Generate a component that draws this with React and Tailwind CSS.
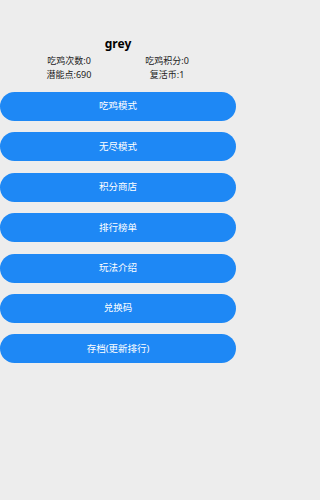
import React from 'react';

const stats = [
  ['吃鸡次数:0', '吃鸡积分:0'],
  ['潜能点:690', '复活币:1'],
];

const menu = ['吃鸡模式', '无尽模式', '积分商店', '排行榜单', '玩法介绍', '兑换码', '存档(更新排行)'];

const App = () => {
  return (
    <div
      className="min-h-screen bg-[#ededed] text-[#222]"
      style={{ fontFamily: '"Noto Sans", "Noto Sans CJK SC", sans-serif' }}
    >
      <div className="w-[236px] pt-[36px]">
        <h1 className="text-center text-[12px] font-bold leading-[16px] text-black">grey</h1>

        <div className="mt-[2px] grid grid-cols-2 px-5 text-[9px] leading-[14px]">
          {stats.flat().map((s) => (
            <div key={s} className="text-center">
              {s}
            </div>
          ))}
        </div>

        <div className="mt-[10px] flex flex-col gap-[11.4px]">
          {menu.map((item) => (
            <button
              key={item}
              className="flex h-[29px] w-full items-center justify-center rounded-full bg-[#1e88f5] text-[9.5px] text-white"
            >
              {item}
            </button>
          ))}
        </div>
      </div>
    </div>
  );
};

export default App;
